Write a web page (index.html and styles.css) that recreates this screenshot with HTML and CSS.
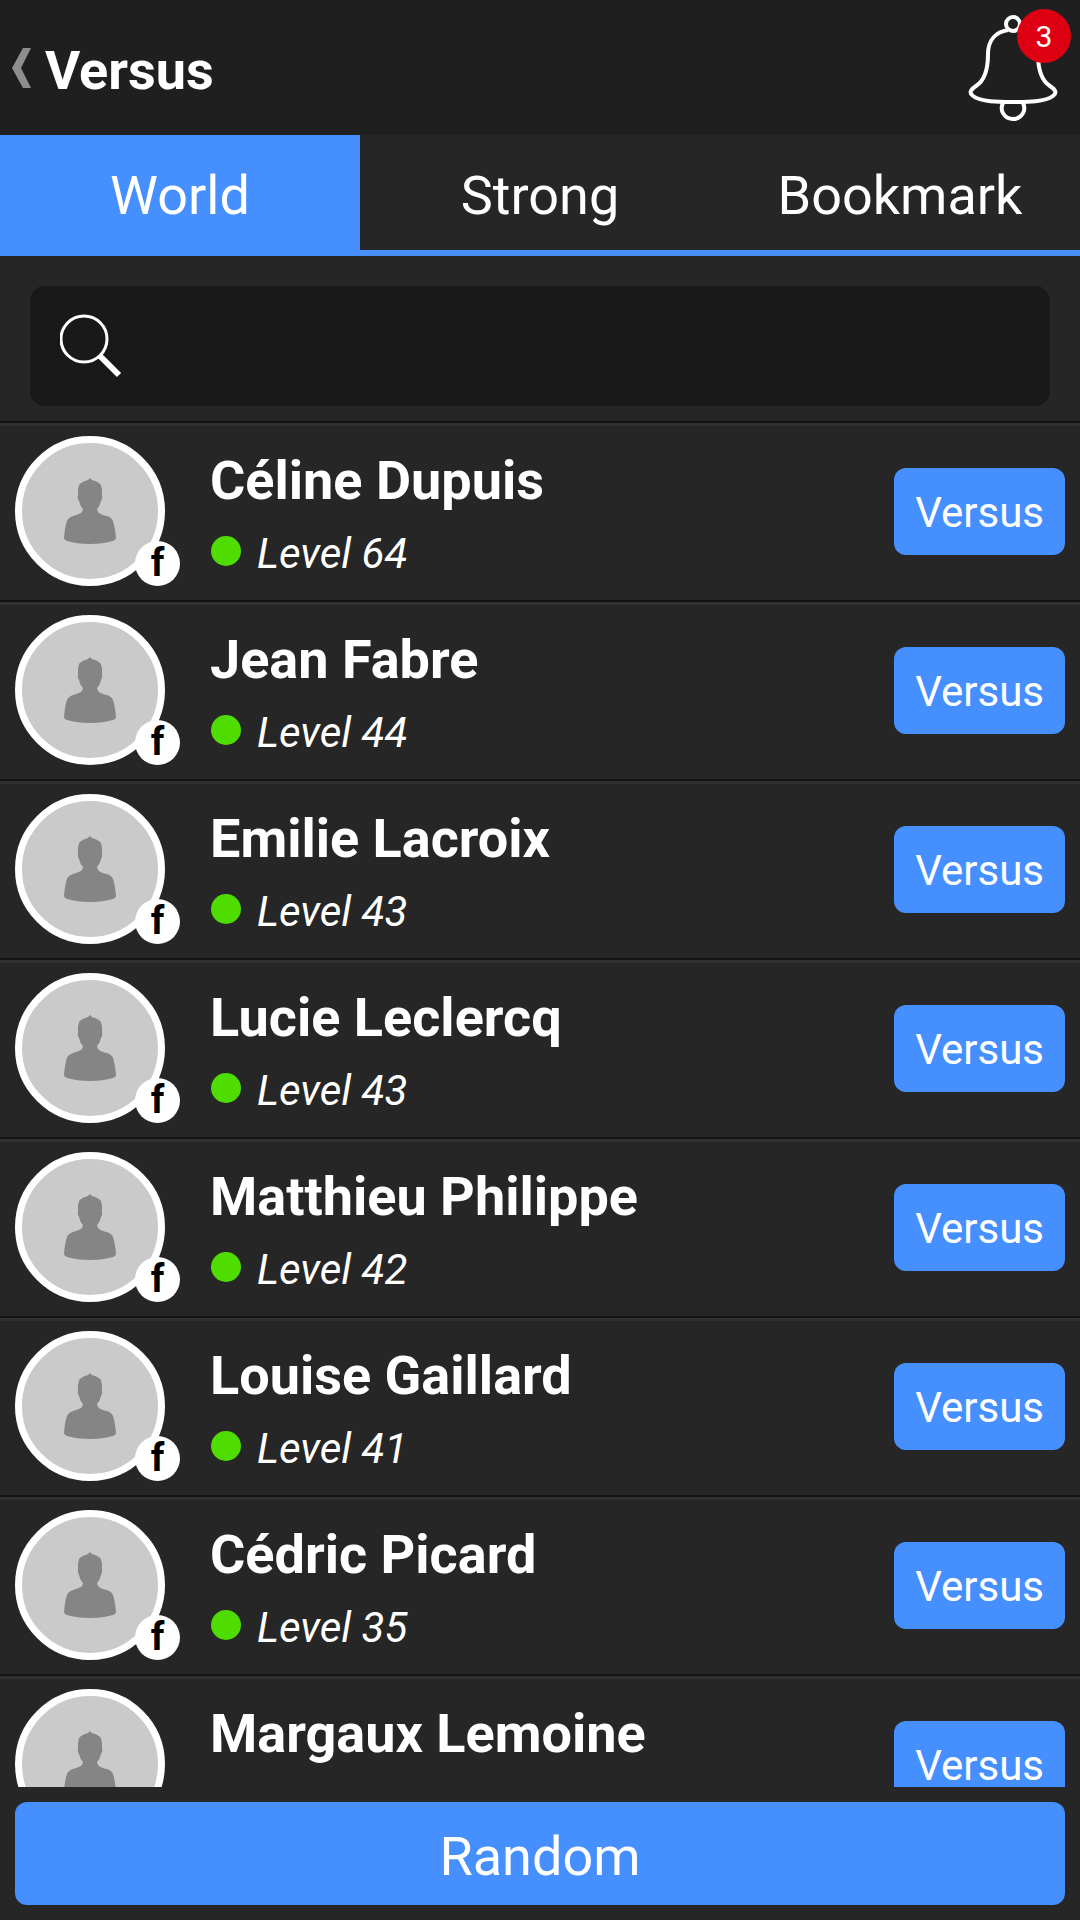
FILE: index.html
```html
<!DOCTYPE html>
<html lang="en">
<head>
    <meta charset="UTF-8">
    <meta name="viewport" content="width=device-width, initial-scale=1.0">
    <title>Versus</title>
    <link rel="stylesheet" href="styles.css">
</head>
<body>
    <!-- Shared icons -->
    <svg class="sprite" aria-hidden="true">
        <symbol id="person" viewBox="0 0 54 66">
            <path d="M27 0 L29 2 Q39 4 39 12 L39 18 Q40 20 38 23 Q37 28 34 31 L35 34 Q38 37 44 38 Q49 40 50 43 Q52 49 53 60 Q53 62 50 63 Q40 66 27 66 Q14 66 4 63 Q1 62 1 60 Q2 48 4 43 Q5 40 10 38 Q17 36 19 34 L20 31 Q17 28 16 23 Q14 20 15 18 L15 12 Q15 4 25 2 Z"/>
        </symbol>
    </svg>

    <header class="top-bar">
        <a href="#" class="back" aria-label="Back">
            <svg width="19" height="42" viewBox="0 0 19 42">
                <path d="M11 1 H19 L9 21 L19 41 H11 L0 21 Z"/>
            </svg>
        </a>
        <h1>Versus</h1>
        <button class="bell" aria-label="Notifications">
            <svg width="90" height="108" viewBox="0 0 90 108">
                <circle cx="45" cy="10" r="7"/>
                <path d="M40 16 C28 18 20 26 20 40 C20 58 16 67 8 72 C2 76 1 79 5 82 C13 88 30 88 45 88 C60 88 77 88 85 82 C89 79 88 76 82 72 C74 67 70 58 70 40 C70 26 62 18 50 16"/>
                <path d="M35 89 C31 97 37 105 45 105 C53 105 59 97 55 89"/>
            </svg>
            <span class="count">3</span>
        </button>
    </header>

    <nav class="tabs">
        <button class="tab active">World</button>
        <button class="tab">Strong</button>
        <button class="tab">Bookmark</button>
    </nav>

    <div class="search">
        <label for="search" aria-label="Search">
            <svg width="62" height="64" viewBox="0 0 62 64">
                <circle cx="24" cy="25" r="23"/>
                <path class="handle" d="M39 41 L59 61"/>
            </svg>
        </label>
        <input type="text" id="search">
    </div>

    <ul class="players">
        <li class="player">
            <div class="avatar">
                <svg><use href="#person"/></svg>
                <span class="network">f</span>
            </div>
            <div class="info">
                <h2>Céline Dupuis</h2>
                <p class="level">Level 64</p>
            </div>
            <button class="versus-btn">Versus</button>
        </li>
        <li class="player">
            <div class="avatar">
                <svg><use href="#person"/></svg>
                <span class="network">f</span>
            </div>
            <div class="info">
                <h2>Jean Fabre</h2>
                <p class="level">Level 44</p>
            </div>
            <button class="versus-btn">Versus</button>
        </li>
        <li class="player">
            <div class="avatar">
                <svg><use href="#person"/></svg>
                <span class="network">f</span>
            </div>
            <div class="info">
                <h2>Emilie Lacroix</h2>
                <p class="level">Level 43</p>
            </div>
            <button class="versus-btn">Versus</button>
        </li>
        <li class="player">
            <div class="avatar">
                <svg><use href="#person"/></svg>
                <span class="network">f</span>
            </div>
            <div class="info">
                <h2>Lucie Leclercq</h2>
                <p class="level">Level 43</p>
            </div>
            <button class="versus-btn">Versus</button>
        </li>
        <li class="player">
            <div class="avatar">
                <svg><use href="#person"/></svg>
                <span class="network">f</span>
            </div>
            <div class="info">
                <h2>Matthieu Philippe</h2>
                <p class="level">Level 42</p>
            </div>
            <button class="versus-btn">Versus</button>
        </li>
        <li class="player">
            <div class="avatar">
                <svg><use href="#person"/></svg>
                <span class="network">f</span>
            </div>
            <div class="info">
                <h2>Louise Gaillard</h2>
                <p class="level">Level 41</p>
            </div>
            <button class="versus-btn">Versus</button>
        </li>
        <li class="player">
            <div class="avatar">
                <svg><use href="#person"/></svg>
                <span class="network">f</span>
            </div>
            <div class="info">
                <h2>Cédric Picard</h2>
                <p class="level">Level 35</p>
            </div>
            <button class="versus-btn">Versus</button>
        </li>
        <li class="player">
            <div class="avatar">
                <svg><use href="#person"/></svg>
            </div>
            <div class="info">
                <h2>Margaux Lemoine</h2>
            </div>
            <button class="versus-btn">Versus</button>
        </li>
    </ul>

    <footer class="bottom-bar">
        <button class="random-btn">Random</button>
    </footer>
</body>
</html>
```

FILE: styles.css
```css
* {
    margin: 0;
    padding: 0;
    box-sizing: border-box;
    font-family: Roboto, sans-serif;
}

body {
    display: flex;
    flex-direction: column;
    height: 100vh;
    background-color: #262626;
    color: #fff;
}

button {
    border: none;
    background: transparent;
    color: #fff;
    cursor: pointer;
}

.sprite {
    display: none;
}

/* Header */
.top-bar {
    display: flex;
    align-items: center;
    height: 135px;
    padding: 0 22px 0 12px;
    background-color: #1f1f1f;
}

.back svg {
    display: block;
    fill: #8e8e8e;
}

h1 {
    flex: 1;
    padding: 6px 0 0 14px;
    font-size: 54px;
    line-height: 64px;
}

.bell {
    position: relative;
}

.bell svg {
    display: block;
    fill: none;
    stroke: #fff;
    stroke-width: 4;
}

.count {
    position: absolute;
    top: -5px;
    right: -13px;
    width: 54px;
    height: 54px;
    border-radius: 50%;
    background-color: #dc0012;
    font-size: 30px;
    line-height: 56px;
    text-align: center;
}

/* Tabs */
.tabs {
    display: flex;
    height: 121px;
    box-shadow: inset 0 -6px #458fff;
}

.tab {
    flex: 1;
    font-size: 54px;
}

.tab.active {
    background-color: #458fff;
}

/* Search */
.search {
    display: flex;
    align-items: center;
    height: 120px;
    margin: 30px 30px 15px;
    padding: 0 30px;
    gap: 24px;
    border-radius: 15px;
    background-color: #191919;
}

.search svg {
    display: block;
    fill: none;
    stroke: #fff;
    stroke-width: 3;
}

.search .handle {
    stroke-width: 6;
}

.search input {
    flex: 1;
    height: 100%;
    border: none;
    outline: none;
    background: transparent;
    color: #fff;
    font-size: 42px;
}

/* Player list */
.players {
    flex: 1;
    min-height: 0;
    overflow-y: auto;
    scrollbar-width: none;
    list-style: none;
}

.player {
    display: flex;
    align-items: center;
    gap: 45px;
    padding: 13px 15px 14px;
    border-top: 2px solid #131313;
    box-shadow: inset 0 3px #303030;
}

.avatar {
    position: relative;
    display: flex;
    align-items: center;
    justify-content: center;
    width: 150px;
    height: 150px;
    border: 7px solid #fff;
    border-radius: 50%;
    background-color: #cacaca;
}

.avatar svg {
    width: 54px;
    height: 66px;
    fill: #858585;
}

.network {
    position: absolute;
    right: -22px;
    bottom: -7px;
    width: 45px;
    height: 45px;
    border-radius: 50%;
    background-color: #fff;
    color: #000;
    font-size: 38px;
    font-weight: bold;
    line-height: 45px;
    text-align: center;
}

.info {
    flex: 1;
    align-self: flex-start;
    padding-top: 13px;
}

h2 {
    font-size: 54px;
    line-height: 64px;
}

.level {
    display: flex;
    align-items: center;
    gap: 16px;
    margin-top: 16px;
    padding-left: 1px;
    font-size: 42px;
    font-style: italic;
    line-height: 50px;
}

.level::before {
    content: "";
    width: 30px;
    height: 30px;
    margin-bottom: 6px;
    border-radius: 50%;
    background-color: #4fdc00;
}

.versus-btn {
    height: 87px;
    padding: 2px 21px 0;
    border-radius: 12px;
    background-color: #458fff;
    font-size: 42px;
}

/* Footer */
.bottom-bar {
    padding: 15px;
}

.random-btn {
    display: block;
    width: 100%;
    height: 103px;
    padding-top: 5px;
    border-radius: 12px;
    background-color: #458fff;
    font-size: 54px;
}
```
